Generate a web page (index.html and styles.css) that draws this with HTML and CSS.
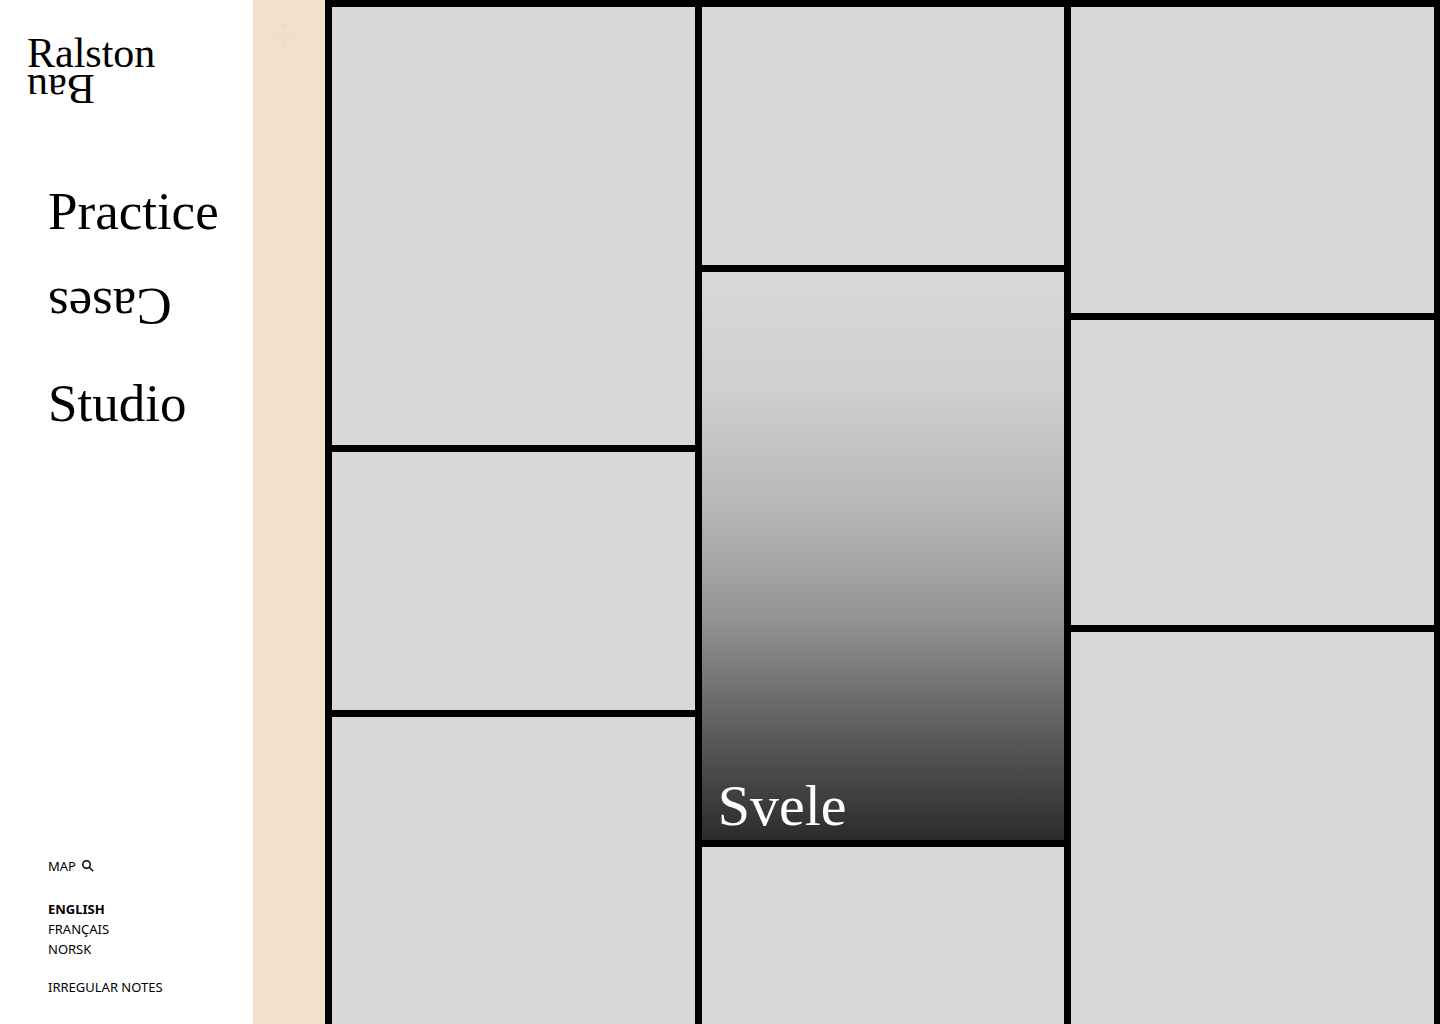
FILE: index.html
```html
<!DOCTYPE html>
<html lang="en">
<head>
<meta charset="utf-8">
<meta name="viewport" content="width=device-width, initial-scale=1">
<title>Ralston Bau</title>
<link rel="stylesheet" href="styles.css">
</head>
<body>
<div class="page">
  <header class="sidebar">
    <a class="logo" href="#"><span class="logo-line">Ralston</span><span class="logo-line flipped">Bau</span></a>
    <nav class="main-nav">
      <a href="#">Practice</a>
      <a class="flipped" href="#">Cases</a>
      <a href="#">Studio</a>
    </nav>
    <div class="tools">
      <a class="map" href="#">MAP
        <svg class="search-icon" viewBox="0 0 12 12" aria-hidden="true"><circle cx="4.5" cy="4.5" r="3.7"/><path d="M7.2 7.2L11.3 11.3"/></svg>
      </a>
      <nav class="languages">
        <a class="current" href="#">ENGLISH</a>
        <a href="#">FRANÇAIS</a>
        <a href="#">NORSK</a>
      </nav>
      <a href="#">IRREGULAR NOTES</a>
    </div>
  </header>
  <div class="strip">
    <svg class="divide-icon" viewBox="0 0 30 22" aria-hidden="true"><path d="M13 0h4v4h-4zM0 10h30v1H0zM13 17h4v4h-4z"/></svg>
  </div>
  <main class="cases">
    <div class="column">
      <a class="tile tall" href="#"></a>
      <a class="tile wide" href="#"></a>
      <a class="tile fill" href="#"></a>
    </div>
    <div class="column">
      <a class="tile wide" href="#"></a>
      <a class="tile featured" href="#">Svele</a>
      <a class="tile fill" href="#"></a>
    </div>
    <div class="column">
      <a class="tile medium" href="#"></a>
      <a class="tile medium" href="#"></a>
      <a class="tile fill" href="#"></a>
    </div>
  </main>
</div>
</body>
</html>
```
FILE: styles.css
```css
* {
  box-sizing: border-box;
}

body {
  margin: 0;
  background: #fff;
  color: #000;
  font-family: "Noto Sans", "Open Sans", sans-serif;
  font-size: 13px;
  line-height: 20px;
}

a {
  color: inherit;
  text-decoration: none;
}

.page {
  display: grid;
  grid-template-columns: 253px 72px 1fr;
  min-height: 100vh;
}

.sidebar {
  display: flex;
  flex-direction: column;
  padding: 36px 24px 27px 48px;
}

.logo,
.main-nav,
.featured {
  font-family: "Liberation Serif", "Times New Roman", serif;
}

.logo {
  display: flex;
  flex-direction: column;
  align-items: flex-start;
  margin-left: -21px;
  font-size: 42px;
  line-height: 35px;
}

.flipped {
  transform: rotate(180deg);
}

.main-nav {
  display: flex;
  flex-direction: column;
  align-items: flex-start;
  gap: 36px;
  margin-top: 75px;
  font-size: 53px;
  line-height: 60px;
}

.tools {
  display: flex;
  flex-direction: column;
  align-items: flex-start;
  gap: 18px;
  margin-top: auto;
}

.map {
  display: flex;
  align-items: center;
  gap: 6px;
  margin-bottom: 5px;
}

.search-icon {
  width: 12px;
  height: 12px;
  fill: none;
  stroke: #000;
  stroke-width: 1.5;
}

.languages {
  display: flex;
  flex-direction: column;
}

.current {
  font-weight: 700;
}

.strip {
  padding: 24px 15px;
  background: #f2dfcc;
}

.divide-icon {
  display: block;
  width: 30px;
  height: 22px;
  fill: #eadacd;
}

.cases {
  display: grid;
  grid-template-columns: repeat(3, 1fr);
  gap: 7px;
  padding: 7px 6px 0 7px;
  background: #000;
}

.column {
  display: flex;
  flex-direction: column;
  gap: 7px;
}

.tile {
  background: #d8d8d8;
}

.tall {
  aspect-ratio: 363 / 438;
}

.wide {
  aspect-ratio: 362 / 258;
}

.medium {
  aspect-ratio: 362 / 305;
}

.featured {
  display: flex;
  align-items: flex-end;
  aspect-ratio: 363 / 568;
  padding: 0 16px;
  background: linear-gradient(#d8d8d8, #d0d0d0 20%, #b9b9b9 40%, #969696 60%, #5f5f5f 80%, #2b2b2b);
  color: #fff;
  font-size: 58px;
  line-height: 68px;
}

.fill {
  flex: 1;
  min-height: 170px;
}
```
